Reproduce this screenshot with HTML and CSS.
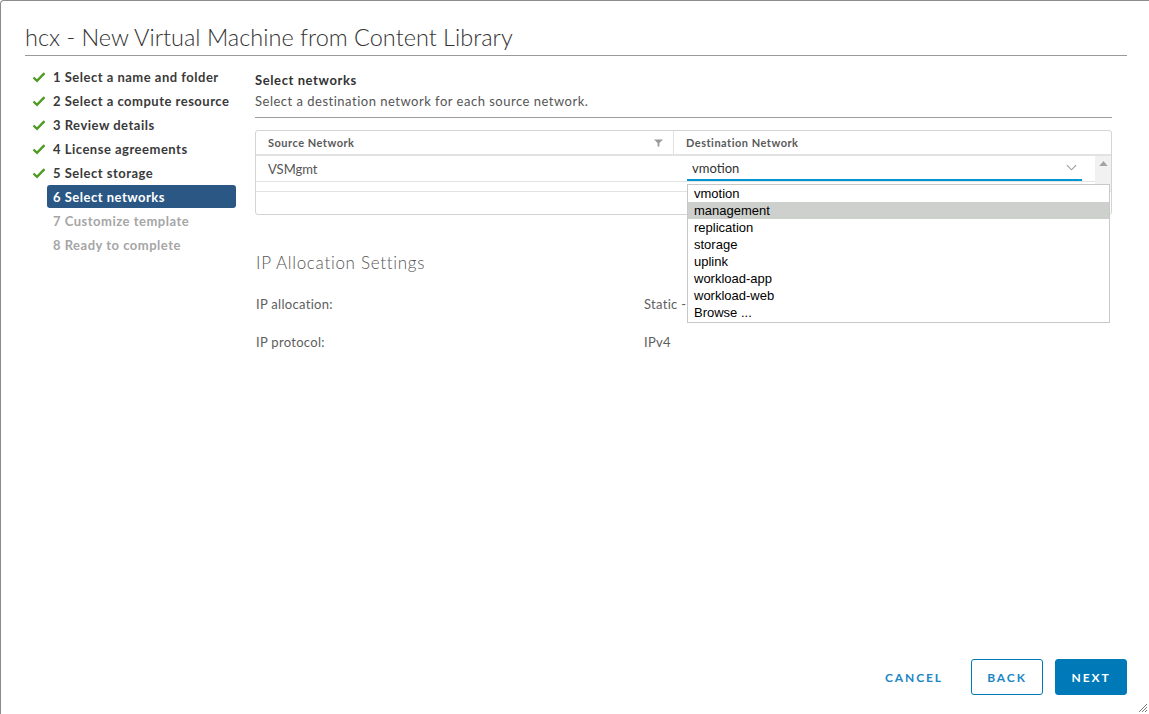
FILE: index.html
```html
<!DOCTYPE html>
<html>
<head>
<meta charset="utf-8">
<link rel="stylesheet" href="styles.css">
</head>
<body>
<div class="dialog">
  <header class="dlg-header">
    <h1 class="dlg-title">hcx - New Virtual Machine from Content Library</h1>
  </header>
  <div class="dlg-body">
    <nav class="steps">
      <div class="step done"><svg class="chk" viewBox="0 0 14 12"><path d="M1.5 6.5 L5 9.8 L12.5 2.2" fill="none" stroke="#4e9a22" stroke-width="2.4"/></svg><span>1 Select a name and folder</span></div>
      <div class="step done"><svg class="chk" viewBox="0 0 14 12"><path d="M1.5 6.5 L5 9.8 L12.5 2.2" fill="none" stroke="#4e9a22" stroke-width="2.4"/></svg><span>2 Select a compute resource</span></div>
      <div class="step done"><svg class="chk" viewBox="0 0 14 12"><path d="M1.5 6.5 L5 9.8 L12.5 2.2" fill="none" stroke="#4e9a22" stroke-width="2.4"/></svg><span>3 Review details</span></div>
      <div class="step done"><svg class="chk" viewBox="0 0 14 12"><path d="M1.5 6.5 L5 9.8 L12.5 2.2" fill="none" stroke="#4e9a22" stroke-width="2.4"/></svg><span>4 License agreements</span></div>
      <div class="step done"><svg class="chk" viewBox="0 0 14 12"><path d="M1.5 6.5 L5 9.8 L12.5 2.2" fill="none" stroke="#4e9a22" stroke-width="2.4"/></svg><span>5 Select storage</span></div>
      <div class="step active"><span>6 Select networks</span></div>
      <div class="step todo"><span>7 Customize template</span></div>
      <div class="step todo"><span>8 Ready to complete</span></div>
    </nav>
    <main class="content">
      <div class="page-head">
        <div class="page-title">Select networks</div>
        <div class="page-sub">Select a destination network for each source network.</div>
      </div>
      <div class="grid">
        <div class="grid-head">
          <div class="col col-src">Source Network<svg class="filter" viewBox="0 0 10 8"><path d="M0 0 H10 L6 4 V8 H4 V4 Z" fill="#9a9a9a"/></svg></div>
          <div class="col col-dst">Destination Network</div>
        </div>
        <div class="grid-body">
          <div class="rows">
            <div class="row">
              <div class="cell cell-src">VSMgmt</div>
              <div class="cell cell-dst">
                <div class="select">
                  <span>vmotion</span>
                  <svg class="chev" viewBox="0 0 12 7"><path d="M1 1 L6 6 L11 1" fill="none" stroke="#9a9a9a" stroke-width="1.2"/></svg>
                </div>
                <ul class="dropdown">
                  <li>vmotion</li>
                  <li class="hl">management</li>
                  <li>replication</li>
                  <li>storage</li>
                  <li>uplink</li>
                  <li>workload-app</li>
                  <li>workload-web</li>
                  <li>Browse ...</li>
                </ul>
              </div>
            </div>
          </div>
          <div class="scrollbar">
            <svg class="arr" viewBox="0 0 10 6"><path d="M0 6 L5 0 L10 6 Z" fill="#a3a3a3"/></svg>
            <svg class="arr" viewBox="0 0 10 6"><path d="M0 0 L5 6 L10 0 Z" fill="#a3a3a3"/></svg>
          </div>
        </div>
        <div class="grid-foot"></div>
      </div>
      <section class="ip">
        <h2 class="ip-title">IP Allocation Settings</h2>
        <div class="ip-row"><span class="ip-label">IP allocation:</span><span class="ip-val">Static -</span></div>
        <div class="ip-row"><span class="ip-label">IP protocol:</span><span class="ip-val">IPv4</span></div>
      </section>
    </main>
  </div>
  <footer class="dlg-foot">
    <button class="btn btn-link">CANCEL</button>
    <button class="btn btn-outline">BACK</button>
    <button class="btn btn-primary">NEXT</button>
  </footer>
  <svg class="grip" viewBox="0 0 8 8"><path d="M8 0 L0 8 M8 3 L3 8 M8 6 L6 8" stroke="#777" stroke-width="1"/></svg>
</div>
</body>
</html>
```

FILE: styles.css
```css
* { box-sizing: border-box; }
html, body { margin: 0; padding: 0; background: #fff; }
body { font-family: Lato, "Open Sans", sans-serif; color: #333; }

.dialog {
  position: relative;
  width: 1149px;
  height: 714px;
  border-top: 1px solid #8c8c8c;
  border-left: 1px solid #8c8c8c;
  border-top-left-radius: 4px;
  background: #fff;
  display: flex;
  flex-direction: column;
  padding: 0 22px 19px 24px;
}

.dlg-header { padding-top: 22px; }
.dlg-title {
  margin: 0;
  font-weight: 300;
  font-size: 23.5px;
  line-height: 29px;
  color: #333;
  padding-bottom: 3px;
  border-bottom: 1px solid #9a9a9a;
  letter-spacing: 0;
}

.dlg-body { display: flex; flex: 1; padding-top: 9px; }

.steps { width: 230px; display: flex; flex-direction: column; padding-left: 7px; padding-right: 19px; }
.step {
  height: 24px;
  display: flex;
  align-items: center;
  font-size: 13px;
  font-weight: 700;
  color: #3a3a3a;
  letter-spacing: 0.5px;
  white-space: nowrap;
}
.step .chk { width: 14px; height: 12px; margin-right: 7px; }
.step.active {
  background: #2b5784;
  color: #fff;
  border-radius: 3px;
  margin-left: 15px;
  padding-left: 6px;
  height: 23px;
  margin-bottom: 1px;
}
.step.todo { color: #a6a6a6; padding-left: 21px; }

.content { flex: 1; margin-right: 15px; padding-top: 4px; }
.page-head { border-bottom: 1px solid #9c9c9c; padding-bottom: 6px; }
.page-title { font-size: 13px; font-weight: 700; color: #333; line-height: 20px; margin-top: 1px; letter-spacing: 0.6px; }
.page-sub { font-size: 13px; color: #555; line-height: 20px; margin-top: 1px; letter-spacing: 0.5px; }

.grid {
  margin-top: 12px;
  border: 1px solid #d4d4d4;
  border-radius: 3px;
}
.grid-head { display: flex; height: 25px; border-bottom: 2px solid #e2e2e2; }
.col { font-size: 11px; font-weight: 700; color: #5a5a5a; display: flex; align-items: center; letter-spacing: 0.5px; }
.col-src { width: 418px; padding-left: 12px; padding-right: 10px; border-right: 1px solid #e2e2e2; justify-content: space-between; }
.filter { width: 9px; height: 8px; }
.col-dst { flex: 1; padding-left: 12px; }

.grid-body { display: flex; height: 36px; border-bottom: 1px solid #e2e2e2; }
.rows { flex: 1; }
.row { display: flex; height: 26px; border-bottom: 1px solid #e2e2e2; }
.cell { font-size: 13px; display: flex; align-items: center; }
.cell-src { width: 419px; padding-left: 12px; color: #555; }
.cell-dst { flex: 1; position: relative; padding-left: 12px; padding-right: 13px; }
.select {
  width: 100%;
  height: 25px;
  display: flex;
  align-items: center;
  justify-content: space-between;
  border-bottom: 2px solid #0095d3;
  font-size: 13px;
  color: #333;
  padding-left: 5px;
  padding-right: 5px;
}
.chev { width: 11px; height: 7px; }
.scrollbar {
  width: 16px;
  background: #f1f1f1;
  display: flex;
  flex-direction: column;
  justify-content: space-between;
  align-items: center;
  padding: 5px 0 2px;
}
.arr { width: 9px; height: 5px; }

.grid-foot { height: 22px; }

.dropdown {
  position: absolute;
  left: 12px;
  top: 28px;
  width: 423px;
  margin: 0;
  padding: 0 0 1px;
  list-style: none;
  border: 1px solid #c8c8c8;
  background: #fff;
  font-family: "Liberation Sans", Arial, sans-serif;
  font-size: 13px;
  color: #000;
  z-index: 2;
}
.dropdown li { height: 17px; line-height: 17px; padding-left: 6px; }
.dropdown li.hl { background: #cdd0cd; }

.ip { margin-top: 37px; }
.ip-title { margin: 0 0 22px; font-size: 17px; font-weight: 300; color: #565656; line-height: 22px; padding-left: 1px; letter-spacing: 0.7px; }
.ip-row { display: flex; font-size: 13px; color: #5e5e5e; height: 38px; padding-left: 1px; letter-spacing: 0.3px; }
.ip-label { width: 388px; }

.dlg-foot { display: flex; justify-content: flex-end; align-items: center; gap: 12px; }
.btn {
  font-family: Lato, "Open Sans", sans-serif;
  font-size: 12px;
  font-weight: 700;
  letter-spacing: 1.9px;
  height: 36px;
  border-radius: 3px;
  padding: 0 14px;
  cursor: pointer;
}
.btn-link { background: none; border: none; color: #1b86c4; margin-right: 2px; }
.btn-outline { background: #fff; border: 1px solid #0079b8; color: #1b86c4; width: 72px; }
.btn-primary { background: #0079b8; border: 1px solid #0079b8; color: #fff; width: 72px; }

.grip { position: absolute; right: 2px; bottom: 2px; width: 8px; height: 8px; }
```
